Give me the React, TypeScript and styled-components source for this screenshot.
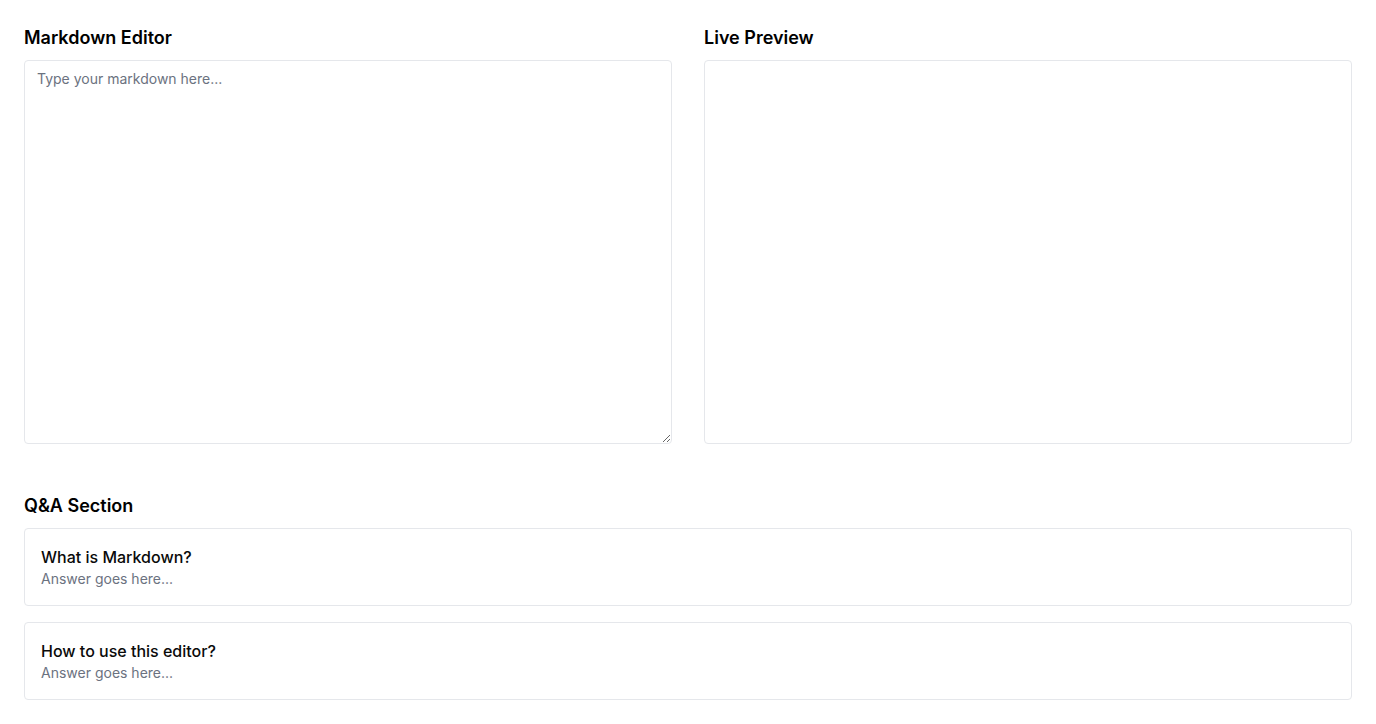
import React, { useState } from 'react';
import styled, { createGlobalStyle } from 'styled-components';

const GlobalStyle = createGlobalStyle`
  * { box-sizing: border-box; }
  body {
    margin: 0;
    background: #ffffff;
    font-family: Inter, "Noto Sans", sans-serif;
    color: #000000;
  }
`;

const Page = styled.div`
  padding: 24px;
`;

const EditorGrid = styled.div`
  display: grid;
  grid-template-columns: 1fr 1fr;
  gap: 32px;
`;

const Column = styled.div`
  display: flex;
  flex-direction: column;
`;

const Heading = styled.h2`
  margin: 0 0 8px 0;
  font-size: 18px;
  line-height: 28px;
  font-weight: 600;
  color: #000000;
`;

const Editor = styled.textarea`
  width: 100%;
  height: 384px;
  padding: 8px 12px;
  border: 1px solid #e5e7eb;
  border-radius: 4px;
  font-family: Inter, "Noto Sans", sans-serif;
  font-size: 14px;
  line-height: 20px;
  color: #000000;
  outline: none;
  resize: vertical;
  display: block;

  &::placeholder {
    color: #6b7280;
  }
`;

const Preview = styled.div`
  height: 384px;
  padding: 8px 12px;
  border: 1px solid #e5e7eb;
  border-radius: 4px;
  font-size: 14px;
  line-height: 20px;
  overflow: auto;
  white-space: pre-wrap;
`;

const QASection = styled.section`
  margin-top: 48px;
`;

const QAList = styled.div`
  display: flex;
  flex-direction: column;
  gap: 16px;
`;

const QACard = styled.div`
  border: 1px solid #e5e7eb;
  border-radius: 4px;
  padding: 16px;
`;

const Question = styled.div`
  font-size: 16px;
  line-height: 24px;
  font-weight: 500;
  color: #0a0a0a;
`;

const Answer = styled.div`
  font-size: 14px;
  line-height: 20px;
  color: #6b7280;
`;

const questions = ['What is Markdown?', 'How to use this editor?'];

export default function App() {
  const [text, setText] = useState('');

  return (
    <>
      <GlobalStyle />
      <Page>
        <EditorGrid>
          <Column>
            <Heading>Markdown Editor</Heading>
            <Editor
              placeholder="Type your markdown here..."
              value={text}
              onChange={(e) => setText(e.target.value)}
            />
          </Column>
          <Column>
            <Heading>Live Preview</Heading>
            <Preview>{text}</Preview>
          </Column>
        </EditorGrid>

        <QASection>
          <Heading>Q&amp;A Section</Heading>
          <QAList>
            {questions.map((q) => (
              <QACard key={q}>
                <Question>{q}</Question>
                <Answer>Answer goes here...</Answer>
              </QACard>
            ))}
          </QAList>
        </QASection>
      </Page>
    </>
  );
}
